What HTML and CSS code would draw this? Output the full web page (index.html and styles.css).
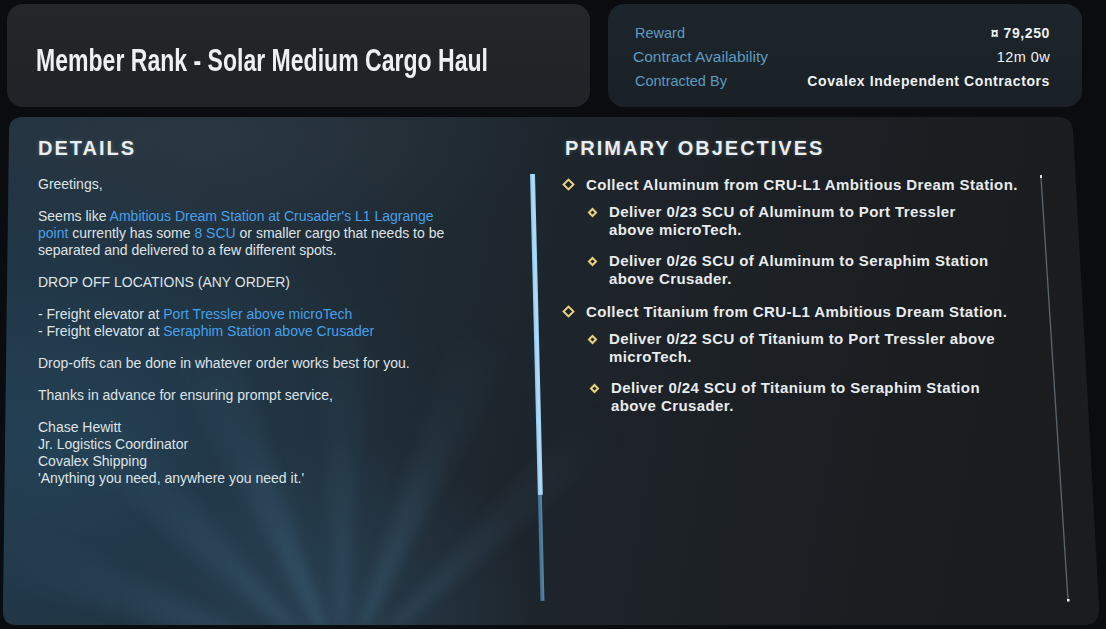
FILE: index.html
```html
<!DOCTYPE html>
<html lang="en">
<head>
<meta charset="utf-8">
<title>Contract - Member Rank - Solar Medium Cargo Haul</title>
<link rel="stylesheet" href="styles.css">
</head>
<body>
<div class="screen">
  <header class="top">
    <div class="card title-card">
      <h1 class="title">Member Rank - Solar Medium Cargo Haul</h1>
    </div>
    <div class="card info-card">
      <div class="info-row">
        <span class="info-label">Reward</span>
        <span class="info-value strong">¤ 79,250</span>
      </div>
      <div class="info-row">
        <span class="info-label big">Contract Availability</span>
        <span class="info-value">12m 0w</span>
      </div>
      <div class="info-row">
        <span class="info-label">Contracted By</span>
        <span class="info-value strong">Covalex Independent Contractors</span>
      </div>
    </div>
  </header>

  <main class="panel">
    <div class="rays"></div>
    <section class="details">
      <h2 class="heading">DETAILS</h2>
      <div class="body-text">
        <p>Greetings,</p>
        <p>Seems like <span class="link">Ambitious Dream Station at Crusader's L1 Lagrange</span><br><span class="link">point</span> currently has some <span class="link">8 SCU</span> or smaller cargo that needs to be<br>separated and delivered to a few different spots.</p>
        <p>DROP OFF LOCATIONS (ANY ORDER)</p>
        <p>- Freight elevator at <span class="link">Port Tressler above microTech</span><br>- Freight elevator at <span class="link">Seraphim Station above Crusader</span></p>
        <p>Drop-offs can be done in whatever order works best for you.</p>
        <p>Thanks in advance for ensuring prompt service,</p>
        <p>Chase Hewitt<br>Jr. Logistics Coordinator<br>Covalex Shipping<br>'Anything you need, anywhere you need it.'</p>
      </div>
    </section>

    <div class="scroll">
      <div class="scroll-thumb"></div>
      <div class="scroll-track"></div>
    </div>

    <section class="objectives">
      <h2 class="heading">PRIMARY OBJECTIVES</h2>
      <ul class="obj-list">
        <li class="obj">
          <div class="obj-main"><span class="diamond"></span><span>Collect Aluminum from CRU-L1 Ambitious Dream Station.</span></div>
          <div class="obj-sub"><span class="diamond small"></span><span class="sub-text">Deliver 0/23 SCU of Aluminum to Port Tressler above microTech.</span></div>
          <div class="obj-sub"><span class="diamond small"></span><span class="sub-text">Deliver 0/26 SCU of Aluminum to Seraphim Station above Crusader.</span></div>
        </li>
        <li class="obj">
          <div class="obj-main"><span class="diamond"></span><span>Collect Titanium from CRU-L1 Ambitious Dream Station.</span></div>
          <div class="obj-sub"><span class="diamond small"></span><span class="sub-text">Deliver 0/22 SCU of Titanium to Port Tressler above microTech.</span></div>
          <div class="obj-sub shifted"><span class="diamond small"></span><span class="sub-text">Deliver 0/24 SCU of Titanium to Seraphim Station above Crusader.</span></div>
        </li>
      </ul>
    </section>

    <svg class="edge-line" width="40" height="440" viewBox="0 0 40 440">
      <line x1="2" y1="2" x2="29" y2="425" stroke="#5c666e" stroke-width="1.3"/>
      <rect x="1" y="0" width="2" height="3" fill="#d9dde0"/>
      <rect x="28" y="424" width="2.5" height="2.5" fill="#eef1f3"/>
    </svg>
  </main>
</div>
</body>
</html>
```

FILE: styles.css
```css
* { box-sizing: border-box; }

html, body {
  margin: 0;
  padding: 0;
}

body {
  width: 1106px;
  height: 629px;
  overflow: hidden;
  background: #0a0c0f;
  font-family: "Liberation Sans", Arial, sans-serif;
  color: #e3e7ea;
}

.screen {
  padding-top: 4px;
}

/* ---------- top row ---------- */
.top {
  display: flex;
  gap: 18px;
  padding-left: 7px;
  height: 103px;
}

.card {
  border-radius: 16px;
  height: 103px;
}

.title-card {
  width: 583px;
  background: linear-gradient(180deg, #232729 0%, #1f2327 100%);
  display: flex;
  align-items: center;
  padding-left: 29px;
}

.title {
  margin: 8px 0 0;
  font-family: "Liberation Sans Narrow", "Liberation Sans", sans-serif;
  font-weight: 700;
  font-size: 32px;
  line-height: 40px;
  color: #eef1f3;
  transform: scaleX(0.72);
  transform-origin: left center;
  white-space: nowrap;
}

.info-card {
  width: 474px;
  background: linear-gradient(180deg, #1c252b 0%, #1a2126 100%);
  padding: 17px 32px 0 27px;
}

.info-row {
  display: flex;
  justify-content: space-between;
  align-items: center;
  height: 24px;
}

.info-label {
  font-size: 14.5px;
  color: #5b9bc2;
}

.info-label.big {
  font-size: 15.5px;
  margin-left: -2px;
}

.info-value {
  font-size: 14.5px;
  color: #eef1f3;
  letter-spacing: 0.4px;
}

.info-value.strong {
  font-weight: 700;
  font-size: 14px;
  letter-spacing: 0.6px;
}

/* ---------- main panel ---------- */
.panel {
  position: relative;
  margin-top: 10px;
  margin-left: 2px;
  width: 1098px;
  height: 512px;
  display: flex;
  align-items: flex-start;
  padding: 19px 0 0 36px;
  clip-path: path('M21 0 H1056 Q1070 0 1071 14 L1097 490 Q1098 508 1082 508 H14 Q1 508 1 494 L7 14 Q7 0 21 0 Z');
  background:
    radial-gradient(ellipse 300px 260px at 330px 500px, rgba(56, 100, 130, 0.35), rgba(56, 100, 130, 0) 70%),
    radial-gradient(ellipse 520px 380px at 60px 330px, rgba(40, 78, 104, 0.55), rgba(40, 78, 104, 0) 75%),
    radial-gradient(ellipse 420px 160px at 200px 20px, rgba(62, 68, 74, 0.4), rgba(62, 68, 74, 0) 80%),
    linear-gradient(100deg, #1f3241 0%, #1f2c36 30%, #1d2329 55%, #1b1e21 80%, #1a1c1f 100%);
}

.rays {
  position: absolute;
  left: 0;
  top: 0;
  width: 100%;
  height: 100%;
  pointer-events: none;
  background:
    conic-gradient(from -90deg at 340px 560px,
      transparent 0deg 14deg,
      rgba(110, 170, 210, 0.16) 18deg 23deg,
      transparent 28deg 38deg,
      rgba(110, 170, 210, 0.15) 42deg 47deg,
      transparent 52deg 60deg,
      rgba(110, 170, 210, 0.18) 64deg 70deg,
      transparent 74deg 84deg,
      rgba(110, 170, 210, 0.13) 88deg 92deg,
      transparent 96deg 106deg,
      rgba(110, 170, 210, 0.17) 110deg 115deg,
      transparent 119deg 130deg,
      rgba(110, 170, 210, 0.13) 134deg 138deg,
      transparent 142deg 360deg);
  -webkit-mask-image: radial-gradient(ellipse 380px 380px at 340px 560px, #000 10%, transparent 100%);
  mask-image: radial-gradient(ellipse 380px 380px at 340px 560px, #000 10%, transparent 100%);
  filter: blur(6px);
}

.heading {
  margin: 0;
  font-size: 20px;
  line-height: 24px;
  font-weight: 700;
  letter-spacing: 2px;
  color: #eaeef1;
  text-shadow: 0 0 4px rgba(200, 220, 235, 0.25);
}

.details {
  position: relative;
  width: 480px;
}

.body-text {
  margin-top: 16px;
  font-size: 14px;
  line-height: 17px;
  color: #dfe3e6;
  width: 440px;
}

.body-text p {
  margin: 0 0 15px;
}

.link {
  color: #46a0ea;
}

.scroll {
  position: relative;
  margin: 38px 0 0 12px;
  width: 6px;
  height: 427px;
  display: flex;
  flex-direction: column;
  align-items: flex-start;
  transform: rotate(-1.4deg);
  transform-origin: top center;
}

.scroll-thumb {
  width: 5px;
  height: 321px;
  background: linear-gradient(90deg, #8fc6ef 0%, #b4ddfb 60%, #9ccbef 100%);
}

.scroll-track {
  width: 4px;
  flex: 1;
  background: linear-gradient(90deg, #3f6c8c 0%, #5887a8 100%);
}

.objectives {
  position: relative;
  margin-left: 29px;
}

.obj-list {
  list-style: none;
  margin: 16px 0 0;
  padding: 0;
}

.obj {
  margin-bottom: 15px;
}

.obj-main,
.obj-sub {
  display: flex;
  align-items: flex-start;
  font-size: 15px;
  line-height: 18px;
  font-weight: 700;
  letter-spacing: 0.4px;
  color: #e8ebed;
}

.obj-main {
  margin-bottom: 9px;
  margin-left: -2px;
}

.obj-sub {
  margin-left: 24px;
  margin-bottom: 13px;
}

.obj-sub:last-child {
  margin-bottom: 0;
}

.obj-sub.shifted {
  margin-left: 26px;
}

.sub-text {
  width: 392px;
}

.diamond {
  flex: none;
  width: 9px;
  height: 9px;
  border: 2px solid #e9d27a;
  transform: rotate(45deg);
  margin: 4px 13px 0 1px;
}

.diamond.small {
  width: 7px;
  height: 7px;
  margin: 6px 13px 0 0;
}

.edge-line {
  position: absolute;
  left: 1037px;
  top: 58px;
}
```
